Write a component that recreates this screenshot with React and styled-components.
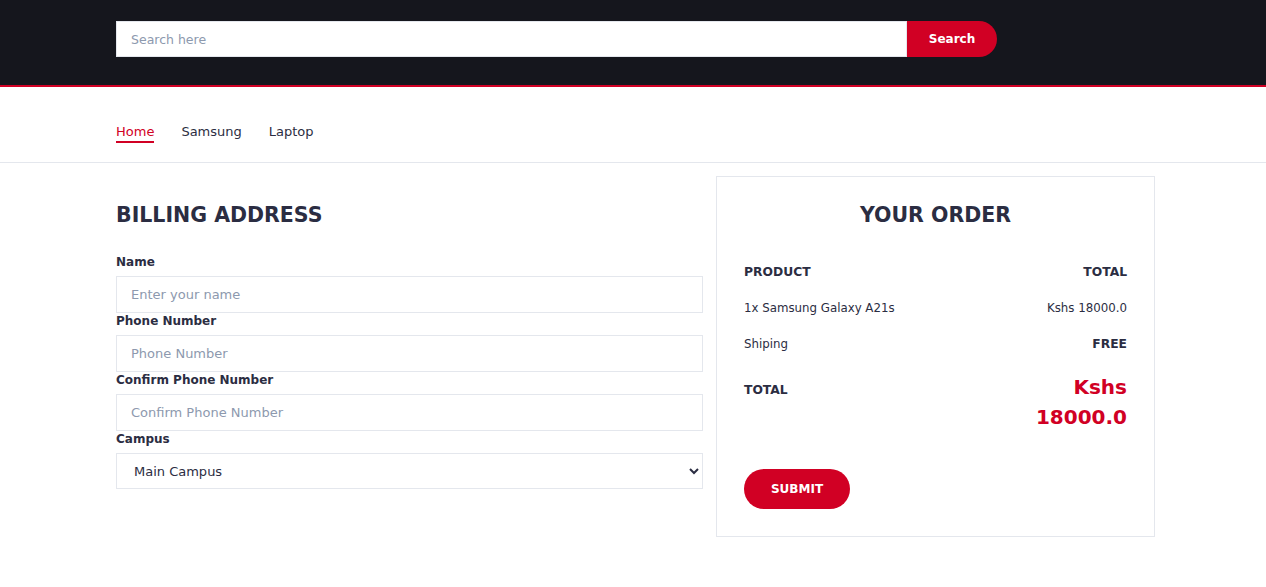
import React from 'react';
import styled, { createGlobalStyle } from 'styled-components';

const GlobalStyle = createGlobalStyle`
  body {
    margin: 0;
    background: #fff;
    font-family: 'DejaVu Sans', 'Open Sans', sans-serif;
    color: #2b2d42;
  }
  * { box-sizing: border-box; }
`;

const Header = styled.header`
  background: #15161d;
  border-bottom: 2px solid #d10024;
  padding: 21px 0 28px;
`;

const Container = styled.div`
  width: 1046px;
  margin: 0 auto;
  padding-left: 6px;
`;

const SearchForm = styled.form`
  display: flex;
  width: 881px;
`;

const SearchInput = styled.input`
  flex: 1;
  height: 36px;
  border: 1px solid #e4e7ed;
  padding: 0 14px;
  font-family: inherit;
  font-size: 12.5px;
  outline: none;
  &::placeholder { color: #8d99ae; }
`;

const SearchButton = styled.button`
  width: 90px;
  height: 36px;
  padding-top: 1px;
  border: none;
  background: #d10024;
  color: #fff;
  font-family: inherit;
  font-weight: 700;
  font-size: 12px;
  border-radius: 0 40px 40px 0;
`;

const Nav = styled.nav`
  border-bottom: 1px solid #e4e7ed;
`;

const NavList = styled.ul`
  display: flex;
  gap: 27px;
  list-style: none;
  margin: 0;
  padding: 36px 0 0;
`;

const NavLink = styled.a`
  display: block;
  font-size: 13px;
  line-height: 18px;
  margin-bottom: 19px;
  color: ${({ active }) => (active ? '#d10024' : '#2b2d42')};
  border-bottom: 2px solid ${({ active }) => (active ? '#d10024' : 'transparent')};
  text-decoration: none;
`;

const Main = styled(Container)`
  display: flex;
  gap: 13px;
  padding-top: 13px;
  padding-bottom: 40px;
  align-items: flex-start;
`;

const Billing = styled.section`
  width: 587px;
  padding-top: 27px;
`;

const Title = styled.h3`
  margin: 0;
  font-size: 20.5px;
  line-height: 24px;
  font-weight: 700;
  text-transform: uppercase;
  color: #2b2d42;
  text-align: ${({ center }) => (center ? 'center' : 'left')};
`;

const Fields = styled.div`
  margin-top: 27px;
`;

const Label = styled.label`
  display: block;
  font-size: 12px;
  line-height: 16px;
  font-weight: 700;
  margin-bottom: 6px;
`;

const Input = styled.input`
  display: block;
  width: 100%;
  height: 37px;
  border: 1px solid #e4e7ed;
  padding: 0 14px;
  font-family: inherit;
  font-size: 13px;
  outline: none;
  &::placeholder { color: #8d99ae; }
`;

const Select = styled.select`
  display: block;
  width: 100%;
  height: 36px;
  border: 1px solid #e4e7ed;
  padding: 0 10px 0 13px;
  background: #fff;
  font-family: inherit;
  font-size: 13px;
  color: #2b2d42;
  outline: none;
`;

const Order = styled.section`
  width: 439px;
  border: 1px solid #e4e7ed;
  padding: 26px 27px 27px;
`;

const Rows = styled.div`
  margin-top: 27px;
`;

const Row = styled.div`
  display: flex;
  justify-content: space-between;
  align-items: baseline;
  padding: 10px 0;
  font-size: ${({ head }) => (head ? '12.3px' : '11.8px')};
  line-height: 16px;
  font-weight: ${({ head }) => (head ? 700 : 400)};
  text-transform: ${({ head }) => (head ? 'uppercase' : 'none')};
`;

const Strong = styled.strong`
  font-size: 12.3px;
  font-weight: 700;
  text-transform: uppercase;
`;

const Price = styled.strong`
  width: min-content;
  text-align: right;
  font-size: 20px;
  line-height: 30px;
  font-weight: 700;
  color: #d10024;
`;

const SubmitButton = styled.button`
  margin-top: 27px;
  width: 106px;
  height: 40px;
  border: none;
  border-radius: 40px;
  background: #d10024;
  color: #fff;
  font-family: inherit;
  font-size: 12px;
  font-weight: 700;
  text-transform: uppercase;
`;

const App = () => (
  <>
    <GlobalStyle />
    <Header>
      <Container>
        <SearchForm onSubmit={(e) => e.preventDefault()}>
          <SearchInput placeholder='Search here' />
          <SearchButton>Search</SearchButton>
        </SearchForm>
      </Container>
    </Header>
    <Nav>
      <Container>
        <NavList>
          <li><NavLink href='#' active>Home</NavLink></li>
          <li><NavLink href='#'>Samsung</NavLink></li>
          <li><NavLink href='#'>Laptop</NavLink></li>
        </NavList>
      </Container>
    </Nav>
    <Main>
      <Billing>
        <Title>Billing Address</Title>
        <Fields>
          <Label>Name</Label>
          <Input placeholder='Enter your name' />
          <Label>Phone Number</Label>
          <Input placeholder='Phone Number' />
          <Label>Confirm Phone Number</Label>
          <Input placeholder='Confirm Phone Number' />
          <Label>Campus</Label>
          <Select defaultValue='main'>
            <option value='main'>Main Campus</option>
          </Select>
        </Fields>
      </Billing>
      <Order>
        <Title center>Your Order</Title>
        <Rows>
          <Row head>
            <span>Product</span>
            <span>Total</span>
          </Row>
          <Row>
            <span>1x Samsung Galaxy A21s</span>
            <span>Kshs 18000.0</span>
          </Row>
          <Row>
            <span>Shiping</span>
            <Strong>Free</Strong>
          </Row>
          <Row>
            <Strong>Total</Strong>
            <Price>Kshs 18000.0</Price>
          </Row>
        </Rows>
        <SubmitButton>Submit</SubmitButton>
      </Order>
    </Main>
  </>
);

export default App;
